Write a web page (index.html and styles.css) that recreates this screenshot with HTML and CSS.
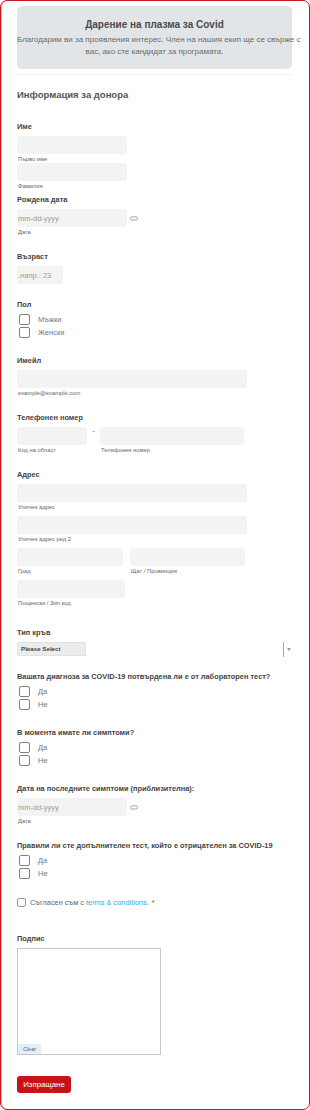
FILE: index.html
```html
<!DOCTYPE html>
<html lang="bg">
<head>
    <meta charset="UTF-8">
    <meta name="viewport" content="width=device-width, initial-scale=1.0">
    <title>Дарение на плазма за Covid</title>
    <link rel="stylesheet" href="styles.css">
</head>
<body>
    <div class="page">
        <div class="intro">
            <h2>Дарение на плазма за Covid</h2>
            <p>Благодарим ви за проявления интерес. Член на нашия екип ще се свържe с<br>вас, ако сте кандидат за програмата.</p>
        </div>
        <div class="divider"></div>
        <h3 class="section-title">Информация за донора</h3>

        <form class="form">
            <div class="field">
                <label class="label">Име</label>
                <input class="input w-name" type="text">
                <div class="sub">Първо име</div>
                <input class="input w-name" type="text">
                <div class="sub">Фамилия</div>
            </div>

            <div class="field tight">
                <label class="label">Рождена дата</label>
                <div class="date-row">
                    <input class="input w-name" type="text" placeholder="mm-dd-yyyy">
                    <svg class="cal" width="8" height="5" viewBox="0 0 8 5"><rect x="0.5" y="0.8" width="7" height="3.2" rx="1.2" fill="none" stroke="#9a9a9a" stroke-width="0.9"/></svg>
                </div>
                <div class="sub">Дата</div>
            </div>

            <div class="field">
                <label class="label">Възраст</label>
                <input class="input w-age" type="text" placeholder=".напр.: 23">
            </div>

            <div class="field">
                <label class="label">Пол</label>
                <div class="choices">
                    <label class="choice"><input type="checkbox"> Мъжки</label>
                    <label class="choice"><input type="checkbox"> Женски</label>
                </div>
            </div>

            <div class="field">
                <label class="label">Имейл</label>
                <input class="input w-full" type="text">
                <div class="sub">example@example.com</div>
            </div>

            <div class="field">
                <label class="label">Телефонен номер</label>
                <div class="phone-row">
                    <div>
                        <input class="input w-area" type="text">
                        <div class="sub">Код на област</div>
                    </div>
                    <span class="dash">-</span>
                    <div>
                        <input class="input w-phone" type="text">
                        <div class="sub">Телефонен номер</div>
                    </div>
                </div>
            </div>

            <div class="field address">
                <label class="label">Адрес</label>
                <input class="input w-full" type="text">
                <div class="sub">Уличен адрес</div>
                <input class="input w-full" type="text">
                <div class="sub">Уличен адрес ред 2</div>
                <div class="city-row">
                    <div>
                        <input class="input w-city" type="text">
                        <div class="sub">Град</div>
                    </div>
                    <div>
                        <input class="input w-state" type="text">
                        <div class="sub">Щат / Провинция</div>
                    </div>
                </div>
                <input class="input w-zip" type="text">
                <div class="sub">Пощенски / Зип код</div>
            </div>

            <div class="field">
                <label class="label">Тип кръв</label>
                <div class="select">
                    <div class="select-value">Please Select</div>
                    <div class="select-arrow"></div>
                </div>
            </div>

            <div class="field">
                <label class="label">Вашата диагноза за COVID-19 потвърдена ли е от лабораторен тест?</label>
                <div class="choices">
                    <label class="choice"><input type="checkbox"> Да</label>
                    <label class="choice"><input type="checkbox"> Не</label>
                </div>
            </div>

            <div class="field">
                <label class="label">В момента имате ли симптоми?</label>
                <div class="choices">
                    <label class="choice"><input type="checkbox"> Да</label>
                    <label class="choice"><input type="checkbox"> Не</label>
                </div>
            </div>

            <div class="field">
                <label class="label">Дата на последните симптоми (приблизителна):</label>
                <div class="date-row">
                    <input class="input w-name" type="text" placeholder="mm-dd-yyyy">
                    <svg class="cal" width="8" height="5" viewBox="0 0 8 5"><rect x="0.5" y="0.8" width="7" height="3.2" rx="1.2" fill="none" stroke="#9a9a9a" stroke-width="0.9"/></svg>
                </div>
                <div class="sub">Дата</div>
            </div>

            <div class="field">
                <label class="label">Правили ли сте допълнителен тест, който е отрицателен за COVID-19</label>
                <div class="choices">
                    <label class="choice"><input type="checkbox"> Да</label>
                    <label class="choice"><input type="checkbox"> Не</label>
                </div>
            </div>

            <div class="field terms">
                <label class="terms-row"><input type="checkbox"> Съгласен съм с <a href="#">terms &amp; conditions.</a> <span class="req">*</span></label>
            </div>

            <div class="field sign">
                <label class="label">Подпис</label>
                <div class="sign-pad">
                    <button type="button" class="clear-btn">Clear</button>
                </div>
            </div>

            <button type="submit" class="submit">Изпращане</button>
        </form>
    </div>
</body>
</html>
```

FILE: styles.css
```css
body {
    margin: 0;
    font-family: "Liberation Sans", Arial, sans-serif;
    background: #fff;
}
.page {
    width: 310px;
    height: 1110px;
    box-sizing: border-box;
    border: 1px solid #c8161e;
    border-radius: 7px;
    box-shadow: inset 1px 0 0 #eea4a4;
    padding: 5px 17px 0 16px;
    overflow: hidden;
}
.intro {
    background: #e2e5e8;
    border-radius: 5px;
    padding: 13px 0 11px;
    text-align: center;
}
.intro h2 {
    margin: 0 0 3px;
    font-size: 10px;
    line-height: 12px;
    color: #4a4a4a;
}
.intro p {
    margin: 0;
    font-size: 8px;
    line-height: 12px;
    color: #6a6a6a;
    white-space: nowrap;
}
.divider {
    margin-top: 5px;
    height: 1px;
    background: #eeeeee;
}
.section-title {
    margin: 14px 0 21px;
    font-size: 9.5px;
    line-height: 12px;
    color: #555;
}
.form {
    margin: 0;
}
.field {
    margin-top: 16px;
}
.field:first-child {
    margin-top: 0;
}
.field.tight {
    margin-top: 5px;
}
.field.terms {
    margin-top: 17px;
}
.field.sign {
    margin-top: 27px;
}
.label {
    display: block;
    margin-bottom: 4px;
    font-size: 7.4px;
    line-height: 10px;
    font-weight: bold;
    color: #444;
}
.input {
    display: block;
    box-sizing: border-box;
    height: 18px;
    margin: 0;
    padding: 0 1px;
    border: none;
    border-radius: 3px;
    background: #f3f3f3;
    font-family: inherit;
    font-size: 7.5px;
    color: #555;
}
.input::placeholder {
    color: #999;
}
.w-name { width: 110px; }
.w-age { width: 46px; }
.w-full { width: 230px; }
.w-area { width: 70px; }
.w-phone { width: 144px; }
.w-city { width: 106px; }
.w-state { width: 115px; }
.w-zip { width: 108px; }
.sub {
    margin-top: 1px;
    padding-left: 1px;
    font-size: 5.8px;
    line-height: 8px;
    color: #666;
}
.address {
    padding-bottom: 5px;
}
.address > .sub {
    margin-bottom: 5px;
}
.address > .sub:last-child {
    margin-bottom: 0;
}
.city-row {
    display: flex;
    gap: 7px;
    margin-bottom: 5px;
}
.date-row {
    display: flex;
    align-items: center;
}
.cal {
    margin-left: 3px;
}
.phone-row {
    display: flex;
    align-items: flex-start;
}
.dash {
    width: 13px;
    text-align: center;
    font-size: 8px;
    line-height: 8px;
    color: #666;
}
.choices {
    display: flex;
    flex-direction: column;
    gap: 2px;
    padding-left: 2px;
    padding-bottom: 2px;
}
.choice {
    display: flex;
    align-items: center;
    height: 11px;
    font-size: 7.5px;
    color: #777;
}
.choice input,
.terms-row input {
    appearance: none;
    -webkit-appearance: none;
    box-sizing: border-box;
    width: 11px;
    height: 11px;
    margin: 0 8px 0 0;
    border: 1px solid #808080;
    border-radius: 2px;
    background: #fff;
}
.select {
    display: flex;
    align-items: center;
    height: 14px;
}
.select-value {
    box-sizing: border-box;
    width: 69px;
    height: 14px;
    padding-left: 3px;
    border: 1px solid #e2e2e2;
    background: #ececec;
    font-size: 6.2px;
    line-height: 12px;
    font-weight: bold;
    color: #444;
}
.select-arrow {
    position: relative;
    margin-left: auto;
    margin-right: 2px;
    width: 6px;
    height: 15px;
    border-left: 1px solid #aaa;
}
.select-arrow::after {
    content: "";
    position: absolute;
    left: 3px;
    top: 6px;
    border-left: 2px solid transparent;
    border-right: 2px solid transparent;
    border-top: 3px solid #999;
}
.terms-row {
    display: flex;
    align-items: center;
    height: 9px;
    font-size: 7.4px;
    color: #666;
}
.terms-row input {
    width: 9px;
    height: 9px;
    margin-right: 4px;
    border-color: #999;
}
.terms-row a {
    margin-left: 2px;
    color: #3aa9dc;
    text-decoration: none;
}
.req {
    margin-left: 3px;
    color: #e0242a;
}
.sign-pad {
    position: relative;
    box-sizing: border-box;
    width: 144px;
    height: 107px;
    border: 1px solid #c8c8c8;
}
.clear-btn {
    position: absolute;
    left: 0;
    bottom: 0;
    width: 23px;
    height: 10px;
    padding: 0;
    border: none;
    background: #e3eef9;
    font-family: inherit;
    font-size: 5.5px;
    color: #666;
}
.submit {
    display: block;
    margin-top: 21px;
    width: 54px;
    height: 17px;
    padding: 0;
    border: none;
    border-radius: 3px;
    background: #c6131b;
    font-family: inherit;
    font-size: 7.8px;
    color: #fff;
}
```
